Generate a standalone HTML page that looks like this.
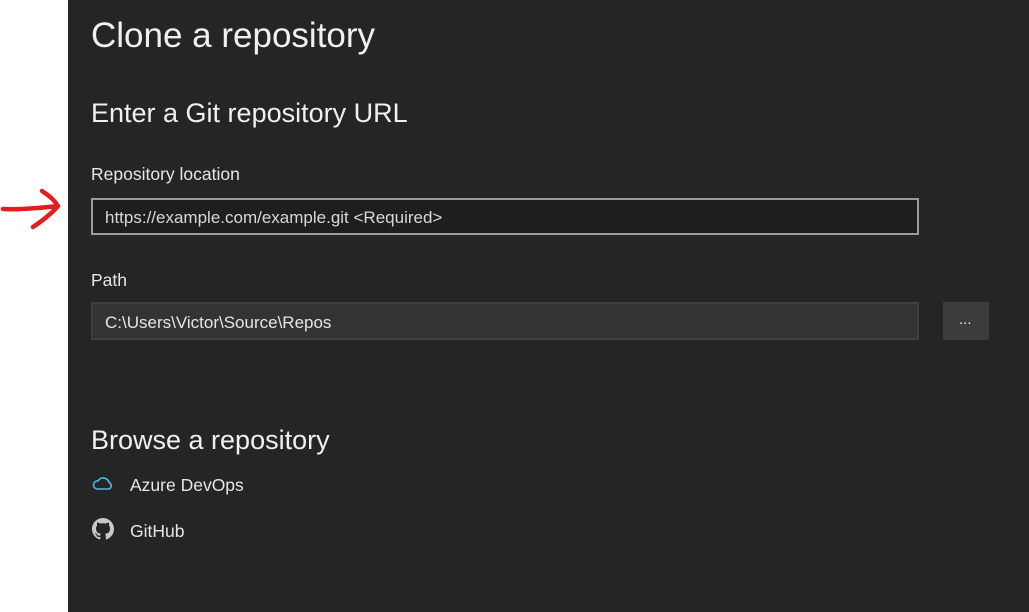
<!DOCTYPE html>
<html><head><style>
body{margin:0;width:1029px;height:612px;background:#fff;position:relative;overflow:hidden;font-family:"Liberation Sans",sans-serif;}
#p{position:absolute;left:68px;top:0;width:961px;height:612px;background:#252525;color:#f0f0f0;}
.t{position:absolute;white-space:nowrap;}
.box{position:absolute;box-sizing:border-box;}
</style></head><body>
<svg style="position:absolute;left:0;top:185px" width="68" height="50"><path d="M3 24 C20 25 40 23 58 21 M42 6 C50 11 55 16 58 21 C52 28 42 36 33 42" stroke="#e01e1e" stroke-width="4.5" fill="none" stroke-linecap="round" stroke-linejoin="round"/></svg>
<div id="p">
<div class="t" style="left:23px;top:16px;font-size:35px;">Clone a repository</div>
<div class="t" style="left:23px;top:98px;font-size:27px;">Enter a Git repository URL</div>
<div class="t" style="left:23px;top:164px;font-size:17.5px;color:#e6e6e6">Repository location</div>
<div class="box" style="left:23px;top:198px;width:828px;height:37px;border:2px solid #9b9b9b;background:#1e1e1e;"></div>
<div class="t" style="left:37px;top:208px;font-size:17px;color:#d8d8d8">https://example.com/example.git &lt;Required&gt;</div>
<div class="t" style="left:23px;top:270px;font-size:17.5px;color:#e6e6e6">Path</div>
<div class="box" style="left:23px;top:302px;width:828px;height:38px;border:2px solid #3f3f3f;background:#333;"></div>
<div class="t" style="left:37px;top:313px;font-size:17px;color:#e6e6e6">C:\Users\Victor\Source\Repos</div>
<div class="box" style="left:875px;top:302px;width:46px;height:38px;background:#3c3c3c;"></div>
<div class="t" style="left:891px;top:311px;font-size:15px;color:#e6e6e6">...</div>
<div class="t" style="left:23px;top:425px;font-size:27px;">Browse a repository</div>
<svg style="position:absolute;left:24px;top:475px" width="22" height="16"><path d="M5 14 H17 A3.5 3.5 0 0 0 17 7.5 A6 6 0 0 0 6 6 A4 4 0 0 0 5 14 Z" stroke="#4fb6e6" stroke-width="1.6" fill="none"/></svg>
<div class="t" style="left:62px;top:475px;font-size:17.5px;color:#e6e6e6">Azure DevOps</div>
<svg style="position:absolute;left:24px;top:518px" width="22" height="22" viewBox="0 0 16 16"><path fill="#c8c8c8" d="M8 0C3.58 0 0 3.58 0 8c0 3.54 2.29 6.53 5.47 7.59.4.07.55-.17.55-.38 0-.19-.01-.82-.01-1.49-2.01.37-2.53-.49-2.69-.94-.09-.23-.48-.94-.82-1.13-.28-.15-.68-.52-.01-.53.63-.01 1.08.58 1.23.82.72 1.21 1.87.87 2.33.66.07-.52.28-.87.51-1.07-1.78-.2-3.64-.89-3.64-3.95 0-.87.31-1.59.82-2.15-.08-.2-.36-1.02.08-2.12 0 0 .67-.21 2.2.82.64-.18 1.32-.27 2-.27.68 0 1.36.09 2 .27 1.53-1.04 2.2-.82 2.2-.82.44 1.1.16 1.92.08 2.12.51.56.82 1.27.82 2.15 0 3.07-1.87 3.75-3.65 3.95.29.25.54.73.54 1.48 0 1.07-.01 1.93-.01 2.2 0 .21.15.46.55.38A8.01 8.01 0 0016 8c0-4.42-3.58-8-8-8z"/></svg>
<div class="t" style="left:62px;top:521px;font-size:17.5px;color:#e6e6e6">GitHub</div>
</div>
</body></html>
